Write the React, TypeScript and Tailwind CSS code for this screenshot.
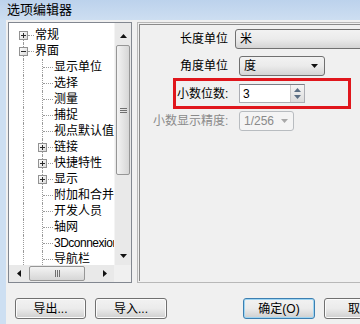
const font = { fontFamily: '"Liberation Sans", "Noto Sans CJK SC", sans-serif' };

type Item = { t: string; lvl: 0 | 1; exp?: "+" | "-" };

const items: Item[] = [
  { t: "常规", lvl: 0, exp: "+" },
  { t: "界面", lvl: 0, exp: "-" },
  { t: "显示单位", lvl: 1 },
  { t: "选择", lvl: 1 },
  { t: "测量", lvl: 1 },
  { t: "捕捉", lvl: 1 },
  { t: "视点默认值", lvl: 1 },
  { t: "链接", lvl: 1, exp: "+" },
  { t: "快捷特性", lvl: 1, exp: "+" },
  { t: "显示", lvl: 1, exp: "+" },
  { t: "附加和合并", lvl: 1 },
  { t: "开发人员", lvl: 1 },
  { t: "轴网", lvl: 1 },
  { t: "3Dconnexion", lvl: 1 },
  { t: "导航栏", lvl: 1 },
];

const Expander = ({ open }: { open?: boolean }) => (
  <svg width="9" height="9" viewBox="0 0 9 9" shapeRendering="crispEdges">
    <defs>
      <linearGradient id="exg" x1="0" y1="0" x2="1" y2="1">
        <stop offset="0" stopColor="#ffffff" />
        <stop offset="1" stopColor="#d8d8d8" />
      </linearGradient>
    </defs>
    <rect x="0.5" y="0.5" width="8" height="8" fill="url(#exg)" stroke="#929292" />
    <path d="M2 4.5h5" stroke="#2b2b2b" />
    {!open && <path d="M4.5 2v5" stroke="#2b2b2b" />}
  </svg>
);

const Tri = ({ dir, color = "#111" }: { dir: "up" | "down" | "left" | "right"; color?: string }) => {
  const d = {
    up: "M0 4 L3.5 0 L7 4 Z",
    down: "M0 0 L7 0 L3.5 4 Z",
    left: "M4 0 L4 7 L0 3.5 Z",
    right: "M0 0 L4 3.5 L0 7 Z",
  }[dir];
  const horiz = dir === "left" || dir === "right";
  return (
    <svg width={horiz ? 4 : 7} height={horiz ? 7 : 4} viewBox={horiz ? "0 0 4 7" : "0 0 7 4"}>
      <path d={d} fill={color} />
    </svg>
  );
};

const TreeRow = ({ item, first }: { item: Item; first: boolean }) => (
  <div className="relative h-[16px] flex items-center whitespace-nowrap text-[12px] leading-[16px] text-black">
    <span
      className={
        first
          ? "absolute left-[14px] top-[8px] bottom-0 border-l border-dotted border-[#9a9a9a]"
          : "absolute left-[14px] top-0 bottom-0 border-l border-dotted border-[#9a9a9a]"
      }
    />
    {item.lvl === 0 ? (
      <>
        <span className="absolute left-[19px] top-[8px] w-[6px] border-t border-dotted border-[#9a9a9a]" />
        <span className="absolute left-[10px] top-[4px] flex">
          <Expander open={item.exp === "-"} />
        </span>
        <span className="pl-[26px]">{item.t}</span>
      </>
    ) : (
      <>
        <span className="absolute left-[33px] top-0 bottom-0 border-l border-dotted border-[#9a9a9a]" />
        <span className="absolute left-[34px] top-[8px] w-[10px] border-t border-dotted border-[#9a9a9a]" />
        {item.exp && (
          <span className="absolute left-[29px] top-[4px] flex">
            <Expander />
          </span>
        )}
        <span className={/^[A-Za-z0-9]/.test(item.t) ? "pl-[45px] tracking-[-0.5px]" : "pl-[45px]"}>{item.t}</span>
      </>
    )}
  </div>
);

const Grip = ({ vertical }: { vertical?: boolean }) =>
  vertical ? (
    <div className="flex flex-col gap-[1px]">
      <div className="w-[7px] h-[1px] bg-[#6f6f6f]" />
      <div className="w-[7px] h-[1px] bg-[#6f6f6f]" />
      <div className="w-[7px] h-[1px] bg-[#6f6f6f]" />
    </div>
  ) : (
    <div className="flex gap-[1px]">
      <div className="h-[7px] w-[1px] bg-[#6f6f6f]" />
      <div className="h-[7px] w-[1px] bg-[#6f6f6f]" />
      <div className="h-[7px] w-[1px] bg-[#6f6f6f]" />
    </div>
  );

const Tree = () => (
  <div className="w-[124px] h-[261px] border border-[#828790] bg-white flex flex-col">
    <div className="flex flex-1 min-h-0">
      <div className="flex-1 overflow-hidden pt-[4px]">
        {items.map((it, i) => (
          <TreeRow key={it.t} item={it} first={i === 0} />
        ))}
      </div>
      <div className="w-[17px] bg-[#e9e9e9] border-l border-[#f4f4f4] flex flex-col">
        <div className="h-[22px] flex items-center justify-center pt-[3px]">
          <Tri dir="up" />
        </div>
        <div className="h-[130px] mx-[1px] rounded-[2px] border border-[#969696] bg-linear-to-r from-[#f3f3f3] to-[#d6d6d6] flex items-center justify-center">
          <Grip vertical />
        </div>
        <div className="flex-1" />
        <div className="h-[19px] flex items-center justify-center">
          <Tri dir="down" />
        </div>
      </div>
    </div>
    <div className="h-[17px] flex">
      <div className="flex-1 bg-[#e9e9e9] flex items-center">
        <div className="w-[20px] flex justify-center">
          <Tri dir="left" />
        </div>
        <div className="w-[56px] h-[15px] rounded-[2px] border border-[#969696] bg-linear-to-b from-[#f3f3f3] to-[#d6d6d6] flex items-center justify-center">
          <Grip />
        </div>
        <div className="flex-1" />
        <div className="w-[18px] flex justify-center">
          <Tri dir="right" />
        </div>
      </div>
      <div className="w-[17px] bg-[#f0f0f0]" />
    </div>
  </div>
);

const WinButton = ({ label, primary, width }: { label: string; primary?: boolean; width: string }) => (
  <div
    className={
      primary
        ? `${width} h-[21px] rounded-[3px] border border-[#3c7fb1] shadow-[inset_0_0_0_1px_#9fd5f2] bg-linear-to-b from-[#f2f2f2] via-[#ebebeb] to-[#cfcfcf] flex items-center justify-center text-[12px] text-black`
        : `${width} h-[21px] rounded-[3px] border border-[#707070] shadow-[inset_0_0_0_1px_#fbfbfb] bg-linear-to-b from-[#f2f2f2] via-[#ebebeb] to-[#cfcfcf] flex items-center justify-center text-[12px] text-black`
    }
  >
    {label}
  </div>
);

export default function App() {
  return (
    <div className="w-[360px] h-[324px] overflow-hidden flex flex-col bg-[#f0f0f0]" style={font}>
      <div className="h-[20px] bg-linear-to-b from-[#bcd2ec] to-[#cddef1] flex items-center pl-[7px] text-[13px] text-black">
        选项编辑器
      </div>
      <div className="flex flex-1 min-h-0">
        <div className="w-[6px] bg-[#cddff2]" />
        <div className="flex-1 flex flex-col min-w-0">
          <div className="flex pt-[2px] pl-[2px]">
            <Tree />
            <div className="ml-[5px] w-[240px] shrink-0 h-[261px] border border-[#b8b8b8] p-[1px]">
              <div className="h-full border-l border-t border-[#8a8a8a] pt-[4px] text-[12px] text-black">
                <div className="flex items-center h-[20px]">
                  <span className="pl-[40px] w-[99px]">长度单位</span>
                  <div className="w-[150px] h-[20px] rounded-[3px] border border-[#707070] bg-linear-to-b from-[#f2f2f2] via-[#ebebeb] to-[#d4d4d4] flex items-center pl-[4px]">
                    米
                  </div>
                </div>
                <div className="flex items-center h-[20px] mt-[7px]">
                  <span className="pl-[40px] w-[99px]">角度单位</span>
                  <div className="w-[86px] h-[20px] rounded-[3px] border border-[#707070] bg-linear-to-b from-[#f2f2f2] via-[#ebebeb] to-[#d4d4d4] flex items-center pl-[4px] pr-[6px] justify-between">
                    <span>度</span>
                    <Tri dir="down" />
                  </div>
                </div>
                <div className="ml-[33px] mt-[2px] w-[178px] h-[31px] border-[3px] border-[#e0161c] flex items-center">
                  <span className="pl-[1px] w-[63px]">小数位数:</span>
                  <div className="w-[66px] h-[19px] border border-[#abadb3] border-t-[#7a7e86] bg-white flex items-center">
                    <span className="flex-1 pl-[3px]">3</span>
                    <div className="w-[14px] h-full border-l border-[#c9c9c9] bg-linear-to-b from-[#f5f5f5] to-[#dcdcdc] flex flex-col items-center justify-center gap-[3px]">
                      <Tri dir="up" color="#5b6f84" />
                      <Tri dir="down" color="#5b6f84" />
                    </div>
                  </div>
                </div>
                <div className="flex items-center h-[20px] mt-[2px]">
                  <span className="pl-[13px] w-[99px] text-[#8a8a8a]">小数显示精度:</span>
                  <div className="w-[55px] h-[20px] rounded-[3px] border border-[#b8bcc0] bg-[#f4f4f4] flex items-center pl-[4px] pr-[5px] justify-between text-[#8a8a8a]">
                    <span>1/256</span>
                    <Tri dir="down" color="#a8a8a8" />
                  </div>
                </div>
              </div>
            </div>
          </div>
          <div className="flex mt-[15px]">
            <div className="ml-[9px]">
              <WinButton label="导出..." width="w-[71px]" />
            </div>
            <div className="ml-[9px]">
              <WinButton label="导入..." width="w-[72px]" />
            </div>
            <div className="ml-[76px]">
              <WinButton label="确定(O)" width="w-[72px]" primary />
            </div>
            <div className="ml-[9px] shrink-0">
              <WinButton label="取消" width="w-[72px]" />
            </div>
          </div>
        </div>
      </div>
    </div>
  );
}
